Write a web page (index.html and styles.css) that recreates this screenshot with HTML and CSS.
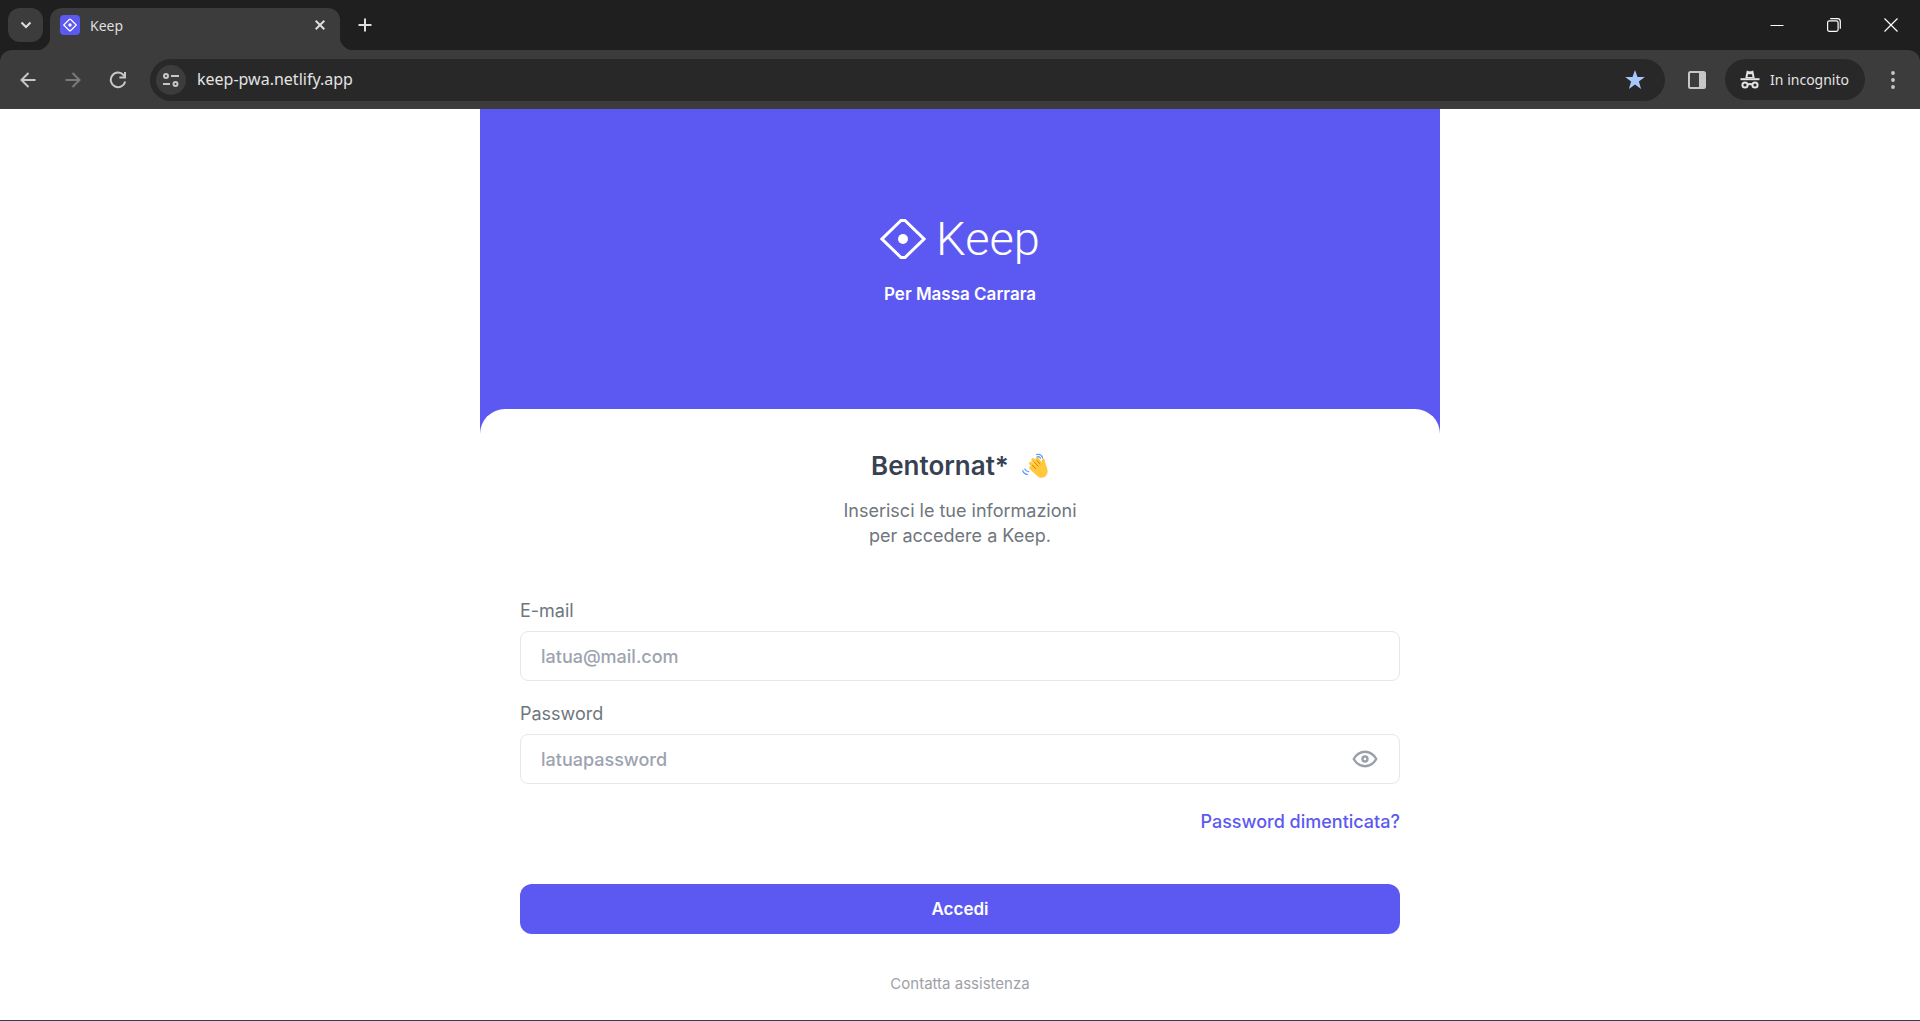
FILE: index.html
```
<!DOCTYPE html>
<html lang="it">
<head>
<meta charset="utf-8">
<meta name="viewport" content="width=device-width, initial-scale=1">
<title>Keep</title>
<link rel="stylesheet" href="styles.css">
</head>
<body>
<header class="browser">
  <div class="tabstrip">
    <button class="tab-search" aria-label="Cerca schede">
      <svg width="12" height="12" viewBox="0 0 12 12" fill="none" stroke="currentColor" stroke-width="2"><path d="M1.500 3.500 6 8l4.500-4.500"/></svg>
    </button>
    <div class="tab">
      <svg class="favicon" width="20" height="20" viewBox="0 0 20 20"><rect width="20" height="20" rx="4" fill="#5c59f2"/><path d="M9.300 4.500a1 1 0 0 1 1.400 0L16.300 10l-5.600 5.500a1 1 0 0 1-1.400 0L3.700 10z" fill="none" stroke="#fff" stroke-width="1.200"/><circle cx="10" cy="10" r="1.700" fill="#fff"/></svg>
      <span class="tab-title">Keep</span>
      <button class="icon-button tab-close" aria-label="Chiudi scheda">
        <svg width="10" height="10" viewBox="0 0 10 10" fill="none" stroke="currentColor" stroke-width="2"><path d="m.700.700 8.600 8.600m0-8.600L.700 9.300"/></svg>
      </button>
    </div>
    <button class="icon-button new-tab" aria-label="Nuova scheda">
      <svg width="14" height="14" viewBox="0 0 14 14" fill="none" stroke="currentColor" stroke-width="2"><path d="M7 .500v13M.500 7h13"/></svg>
    </button>
    <div class="window-controls">
      <button class="icon-button" aria-label="Riduci a icona"><svg width="14" height="14" viewBox="0 0 14 14"><path d="M.500 7.500h13" stroke="currentColor"/></svg></button>
      <button class="icon-button" aria-label="Ripristina"><svg width="14" height="14" viewBox="0 0 14 14" fill="none" stroke="currentColor" stroke-width="1.200"><rect x=".600" y="2.900" width="10.500" height="10.500" rx="1.800"/><path d="M3.200.700h7.300a2.800 2.800 0 0 1 2.800 2.800v7.300"/></svg></button>
      <button class="icon-button" aria-label="Chiudi"><svg width="14" height="14" viewBox="0 0 14 14" fill="none" stroke="currentColor" stroke-width="1.200"><path d="m.500.500 13 13m0-13-13 13"/></svg></button>
    </div>
  </div>
  <div class="toolbar">
    <div class="navigation">
      <button class="icon-button" aria-label="Indietro"><svg width="16" height="16" viewBox="0 0 16 16" fill="none" stroke="currentColor" stroke-width="2"><path d="M15.500 8H2M8.500 1 1.500 8l7 7"/></svg></button>
      <button class="icon-button" aria-label="Avanti" disabled><svg width="16" height="16" viewBox="0 0 16 16" fill="none" stroke="currentColor" stroke-width="2"><path d="M.500 8H14M7.500 1l7 7-7 7"/></svg></button>
      <button class="icon-button" aria-label="Ricarica"><svg width="18" height="18" viewBox="0 0 18 18" fill="none" stroke="currentColor" stroke-width="2"><path d="M16.200 10.500A7.300 7.300 0 1 1 14.500 4L16 5.600M16 1v5.600h-5.600"/></svg></button>
    </div>
    <div class="address">
      <button class="site-info" aria-label="Informazioni sul sito"><svg width="16" height="14" viewBox="0 0 16 14" fill="none" stroke="currentColor" stroke-width="2"><circle cx="3" cy="3" r="2"/><path d="M8 3h8M0 11h7"/><circle cx="12.500" cy="11" r="2"/></svg></button>
      <input class="url" type="text" value="keep-pwa.netlify.app" aria-label="Barra degli indirizzi">
      <button class="icon-button bookmark" aria-label="Preferito"><svg width="20" height="20" viewBox="0 0 20 20" fill="currentColor"><path d="m10 0 2.500 7h7.300l-5.900 4.500 2.200 7.500L10 14.600 3.900 19l2.200-7.500L.200 7h7.300z"/></svg></button>
    </div>
    <button class="icon-button side-panel" aria-label="Riquadro laterale"><svg width="18" height="18" viewBox="0 0 18 18"><rect x="1" y="1" width="16" height="16" rx="1.500" fill="none" stroke="currentColor" stroke-width="2"/><path d="M11 1h6v16h-6z" fill="currentColor"/></svg></button>
    <button class="incognito"><svg width="20" height="20" viewBox="0 0 20 20" fill="none" stroke="currentColor" stroke-width="2"><path d="M.500 9.200h19"/><path d="M5.300 8l1.500-7.500 2 .700h2.400l2-.700L14.700 8z" fill="currentColor" stroke="none"/><path d="M8 4.200h4L12.500 7h-5z" fill="#282828" stroke="none"/><circle cx="5" cy="15" r="2.600"/><circle cx="15" cy="15" r="2.600"/><path d="M7.600 14.500q2.400-1 4.800 0"/></svg><span>In incognito</span></button>
    <button class="icon-button menu" aria-label="Menu"><svg width="4" height="18" viewBox="0 0 4 18" fill="currentColor"><circle cx="2" cy="2" r="1.900"/><circle cx="2" cy="9" r="1.900"/><circle cx="2" cy="16" r="1.900"/></svg></button>
  </div>
</header>

<main class="page">
  <section class="hero">
    <div class="brand">
      <svg width="46" height="40" viewBox="0 0 46 40"><path d="M21 1.500h4L44 20 25 38.500h-4L2 20z" fill="none" stroke="#fff" stroke-width="3"/><circle cx="23" cy="20" r="5" fill="#fff"/></svg>
      <span class="wordmark">Keep</span>
    </div>
    <p class="tagline">Per Massa Carrara</p>
  </section>
  <section class="card">
    <h1 class="welcome">Bentornat*
      <svg width="27" height="26" viewBox="0 0 27 26" role="img" aria-label="Mano che saluta">
        <g fill="none" stroke="#ffc83d" stroke-width="3.600" stroke-linecap="round"><path d="m9 15 7 6M8.800 10.500l8 7M11 7l8 8M15.200 6l5 7"/></g>
        <path d="M14 11.500l5.500-.500.500-5q.500-1.500 2-.500 1 1 1.200 4l2 6q1.200 4-1 7-3 3.500-7.400 1.800L10 18z" fill="#ffc83d"/>
        <g fill="none" stroke="#d67d00" stroke-width=".900" stroke-linecap="round"><path d="m10.300 12.300 3.500 3.300M12 9l4 4M15 7.500l3 3.500"/></g>
        <g fill="none" stroke="#5092ff" stroke-width="1.100" stroke-linecap="round"><path d="M.700 17.500q1 3.500 5 4M2.800 16q1 2.300 4 2.800M14.500 1.600q4.500-1.500 6 2.900M15 3.900q2.500-.800 3.500 1.300"/></g>
      </svg>
    </h1>
    <p class="intro">Inserisci le tue informazioni<br>per accedere a Keep.</p>
    <form class="login">
      <div class="field">
        <label for="email">E-mail</label>
        <input class="text-input" id="email" type="email" placeholder="latua@mail.com">
      </div>
      <div class="field">
        <label for="password">Password</label>
        <div class="password-box">
          <input class="text-input" id="password" type="password" placeholder="latuapassword">
          <button class="icon-button reveal" type="button" aria-label="Mostra password"><svg width="26" height="18" viewBox="0 0 26 18" fill="none" stroke="currentColor" stroke-width="2.400"><path d="M1.700 9Q6 1.800 13 1.800T24.300 9Q20 16.200 13 16.200T1.700 9z" stroke-linejoin="round"/><circle cx="13" cy="9" r="2.500"/></svg></button>
        </div>
      </div>
      <a class="forgot" href="#">Password dimenticata?</a>
      <button class="submit" type="submit">Accedi</button>
    </form>
    <a class="support" href="#">Contatta assistenza</a>
  </section>
</main>
</body>
</html>
```
FILE: styles.css
```
* { box-sizing: border-box; }

body {
  margin: 0;
  min-height: 100vh;
  display: flex;
  flex-direction: column;
  background: #fff;
  border-bottom: 1px solid #343c62;
  font: 400 18px/25px Inter, "Liberation Sans", sans-serif;
}

button, input { font: inherit; color: inherit; }
button { border: 0; padding: 0; background: none; cursor: pointer; }
h1, p { margin: 0; }
svg { display: block; flex: none; }

/* Browser chrome */
.browser {
  background: #1f1f1f;
  color: #dedede;
  font-family: "Noto Sans", "Open Sans", sans-serif;
}

.icon-button { display: grid; place-items: center; flex: none; }

.tabstrip { display: flex; height: 50px; padding: 8px 1px 0 8px; }

.tab-search {
  display: grid;
  place-items: center;
  width: 35px;
  height: 34px;
  border-radius: 12px;
  background: #3c3c3c;
}

.tab {
  position: relative;
  display: flex;
  align-items: center;
  gap: 10px;
  width: 290px;
  margin-left: 7px;
  padding: 0 14px 8px 10px;
  border-radius: 12px 12px 0 0;
  background: #3c3c3c;
  font-size: 14px;
}

/* Flared feet where the active tab meets the toolbar */
.tab::before, .tab::after {
  content: "";
  position: absolute;
  bottom: 0;
  width: 14px;
  height: 14px;
}
.tab::before { right: 100%; background: radial-gradient(circle at 0 0, transparent 14px, #3c3c3c 15px); }
.tab::after { left: 100%; background: radial-gradient(circle at 100% 0, transparent 14px, #3c3c3c 15px); }

.tab-title { flex: 1; }
.tab-close { width: 12px; height: 20px; }
.new-tab { width: 34px; height: 34px; margin-left: 8px; }

.window-controls { display: flex; margin-left: auto; height: 34px; color: #fff; }
.window-controls .icon-button { width: 57px; }

.toolbar {
  display: flex;
  align-items: center;
  height: 59px;
  padding: 0 14px 0 5px;
  border-radius: 12px 12px 0 0;
  background: #3c3c3c;
  color: #c7c7c7;
}

.navigation { display: flex; }
.navigation .icon-button { width: 45px; height: 40px; }
.navigation .icon-button:disabled { color: #7a7a7a; }

.address {
  flex: 1;
  display: flex;
  align-items: center;
  gap: 11px;
  height: 42px;
  margin-left: 10px;
  padding: 0 20px 0 6px;
  border-radius: 21px;
  background: #282828;
}

.site-info {
  display: grid;
  place-items: center;
  width: 30px;
  height: 30px;
  border-radius: 50%;
  background: #3c3c3c;
}

.url {
  flex: 1;
  min-width: 0;
  border: 0;
  padding: 0;
  background: none;
  color: #e3e3e3;
  font-size: 16px;
}

.bookmark { color: #a8c7fa; }
.side-panel { width: 56px; height: 40px; margin-left: 4px; }

.incognito {
  display: flex;
  align-items: center;
  gap: 10px;
  height: 41px;
  padding: 0 16px 0 15px;
  border-radius: 21px;
  background: #282828;
  color: #e3e3e3;
  font-size: 14px;
}

.menu { width: 26px; height: 40px; margin-left: 15px; }

/* Login page */
.page { width: 100%; max-width: 960px; margin: 0 auto; }

.hero {
  display: flex;
  flex-direction: column;
  align-items: center;
  gap: 18px;
  min-height: 325px;
  padding: 105px 40px 40px;
  background: #5c59f2;
  color: #fff;
}

.brand { display: flex; align-items: center; gap: 10px; }
.wordmark { font: 300 47px/50px Roboto, "Liberation Sans", sans-serif; }
.tagline { font-size: 17px; font-weight: 600; }

.card {
  display: flex;
  flex-direction: column;
  align-items: center;
  margin-top: -25px;
  padding: 41px 40px 20px;
  border-radius: 25px 25px 0 0;
  background: #fff;
}

.welcome {
  display: flex;
  align-items: center;
  gap: 13px;
  color: #374151;
  font-size: 26px;
  font-weight: 600;
  line-height: 32px;
}

.intro { margin-top: 16px; color: #6f767d; text-align: center; }

.login {
  display: flex;
  flex-direction: column;
  gap: 20px;
  width: 100%;
  margin-top: 50px;
}

.field { display: flex; flex-direction: column; gap: 8px; color: #6f767d; }

.text-input {
  width: 100%;
  height: 50px;
  padding: 0 20px;
  border: 1px solid #e5e7eb;
  border-radius: 8px;
  background: #fff;
  font-weight: 500;
}
.text-input::placeholder { color: #9ca3af; opacity: 1; }

.password-box { position: relative; }
.password-box .text-input { padding-right: 60px; }
.reveal {
  position: absolute;
  top: 0;
  right: 12px;
  width: 46px;
  height: 50px;
  color: #9ca0a8;
}

.forgot {
  align-self: flex-end;
  margin-top: 5px;
  color: #5c59f2;
  font-weight: 500;
  text-decoration: none;
}

.submit {
  height: 50px;
  margin-top: 30px;
  border-radius: 12px;
  background: #5c59f2;
  color: #fff;
  font-size: 17px;
  font-weight: 600;
}

.support {
  margin-top: 37px;
  color: #9ea1a7;
  font-size: 15px;
  text-decoration: none;
}
```
